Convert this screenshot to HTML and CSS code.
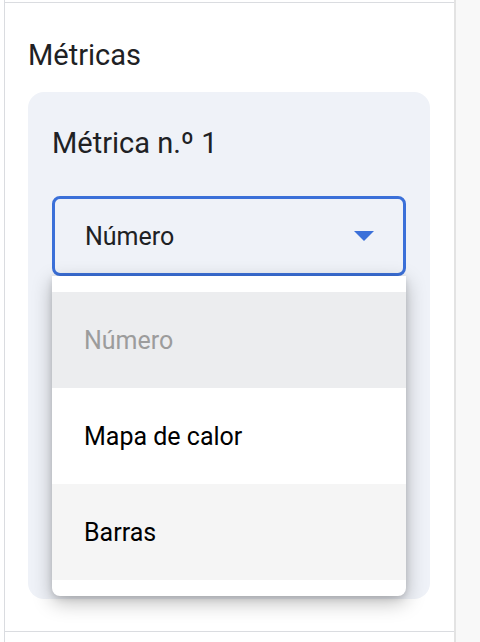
FILE: index.html
```html
<!DOCTYPE html>
<html lang="es">
<head>
<meta charset="utf-8">
<title>Métricas</title>
<link rel="stylesheet" href="styles.css">
</head>
<body>
<div class="page">
  <div class="panel">
    <div class="section-top"></div>
    <section class="section">
      <h2 class="heading">Métricas</h2>
      <div class="card">
        <h3 class="card-title">Métrica n.º 1</h3>
        <div class="select-wrap">
          <div class="select">
            <span class="select-value">Número</span>
            <svg class="arrow" width="20" height="10" viewBox="0 0 20 10"><path d="M0 0h20L10 10z" fill="#3b70d9"/></svg>
          </div>
          <ul class="menu">
            <li class="item item-disabled">Número</li>
            <li class="item">Mapa de calor</li>
            <li class="item item-hover">Barras</li>
          </ul>
        </div>
      </div>
    </section>
    <div class="section-bottom"></div>
  </div>
  <div class="side"></div>
</div>
</body>
</html>
```

FILE: styles.css
```css
* { box-sizing: border-box; }
html, body { margin: 0; padding: 0; }
body {
  background: #ffffff;
  font-family: Roboto, "Liberation Sans", Arial, sans-serif;
  color: #202124;
}
.page {
  display: flex;
  height: 642px;
  overflow: hidden;
}
.panel {
  margin-left: 4px;
  width: 452px;
  height: 642px;
  border-left: 1px solid #dadce0;
  border-right: 2px solid #e3e3e3;
  display: flex;
  flex-direction: column;
  background: #fff;
}
.side {
  flex: 1;
  background: #f8f8f8;
}
.section-top {
  height: 3px;
  border-bottom: 1px solid #dadce0;
  flex: none;
}
.section {
  height: 629px;
  flex: none;
  padding: 34px 24px 0 23px;
  border-bottom: 1px solid #dadce0;
}
.section-bottom { flex: 1; }
.heading {
  margin: 0;
  font-size: 29px;
  line-height: 36px;
  font-weight: 400;
  color: #202124;
}
.card {
  margin-top: 19px;
  height: 507px;
  background: #eff2f8;
  border-radius: 16px;
  padding: 33px 24px 0 24px;
}
.card-title {
  margin: 0;
  font-size: 29px;
  line-height: 36px;
  font-weight: 400;
  color: #202124;
}
.select-wrap {
  position: relative;
  margin-top: 35px;
}
.select {
  height: 80px;
  border: 3px solid #3b70d9;
  border-radius: 8px;
  display: flex;
  align-items: center;
  justify-content: space-between;
  padding: 0 29px 0 30px;
}
.select-value {
  font-size: 25px;
  color: #202124;
}
.arrow { display: block; }
.menu {
  position: absolute;
  top: 100%;
  left: 0;
  right: 0;
  margin: 0;
  padding: 16px 0;
  list-style: none;
  background: #fff;
  border-radius: 0 0 8px 8px;
  box-shadow: 0 6px 20px rgba(0, 0, 0, 0.28), 0 2px 6px rgba(0, 0, 0, 0.12);
}
.item {
  height: 96px;
  display: flex;
  align-items: center;
  padding-left: 32px;
  font-size: 25px;
  color: #000;
}
.item-disabled {
  background: #ecedef;
  color: #9c9c9c;
}
.item-hover {
  background: #f5f5f5;
}
```
